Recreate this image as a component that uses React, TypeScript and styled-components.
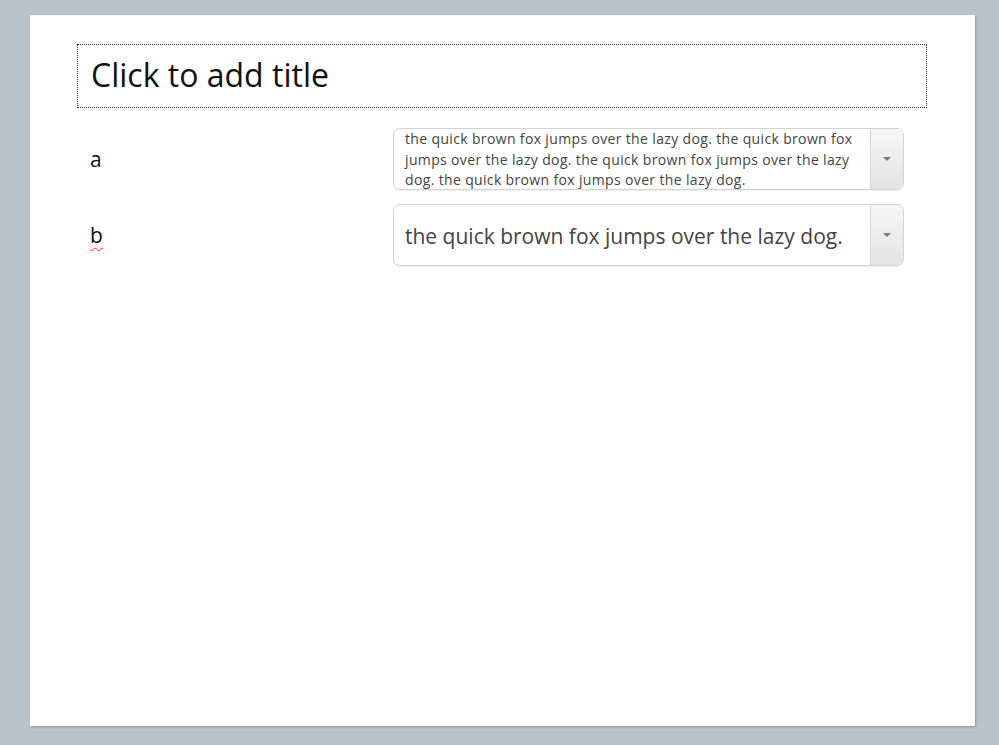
import React from 'react'
import styled, { createGlobalStyle } from 'styled-components'

const GlobalStyle = createGlobalStyle`
  html, body {
    margin: 0;
    padding: 0;
    background: #b8c2cb;
  }
  body {
    font-family: "Open Sans", "Noto Sans", "Liberation Sans", sans-serif;
  }
`

const Page = styled.div`
  width: 999px;
  height: 745px;
  box-sizing: border-box;
  padding: 15px 24px 19px 30px;
  display: flex;
`

const Slide = styled.div`
  flex: 1;
  background: #ffffff;
  box-shadow: 1px 1px 2px rgba(90, 100, 110, 0.45);
  padding: 29px 48px 0 47px;
  display: flex;
  flex-direction: column;
`

const TitleBox = styled.div`
  height: 64px;
  box-sizing: border-box;
  border: 1px dotted #333;
  display: flex;
  align-items: center;
  padding: 0 0 4px 13px;
  font-size: 32px;
  color: #111;
`

const Rows = styled.div`
  display: flex;
  flex-direction: column;
  gap: 14px;
  margin-top: 20px;
`

const Row = styled.div`
  display: grid;
  grid-template-columns: 316px 511px;
  align-items: center;
`

const Label = styled.span<{ $misspelled?: boolean }>`
  padding-left: 13px;
  font-size: 21px;
  color: #111;
  text-decoration: ${p => (p.$misspelled ? 'underline wavy #e23' : 'none')};
  text-decoration-thickness: 1px;
  text-underline-offset: 4px;
`

const Combo = styled.div`
  height: 62px;
  box-sizing: border-box;
  border: 1px solid #d2d2d2;
  border-radius: 7px;
  box-shadow: 0 1px 1px rgba(0, 0, 0, 0.06);
  display: flex;
  overflow: hidden;
  background: #fff;
`

const ComboText = styled.div<{ $small?: boolean }>`
  flex: 1;
  padding: ${p => (p.$small ? '0 5px 0 11px' : '1px 10px 0 11px')};
  display: flex;
  align-items: ${p => (p.$small ? 'flex-start' : 'center')};
  font-size: ${p => (p.$small ? '14px' : '21px')};
  letter-spacing: ${p => (p.$small ? '0.35px' : '0')};
  line-height: ${p => (p.$small ? '20.5px' : '28px')};
  color: #444;
  overflow: hidden;
`

const DropButton = styled.div`
  width: 32px;
  border-left: 1px solid #d6d6d6;
  background: linear-gradient(to bottom, #f6f6f6, #e3e3e3);
  display: flex;
  align-items: center;
  justify-content: center;
`

const Arrow = styled.span`
  width: 0;
  height: 0;
  border-left: 4px solid transparent;
  border-right: 4px solid transparent;
  border-top: 4px solid #777;
`

const long =
  'the quick brown fox jumps over the lazy dog. the quick brown fox jumps over the lazy dog. the quick brown fox jumps over the lazy dog. the quick brown fox jumps over the lazy dog.'

const App: React.FC = () => {
  return (
    <Page>
      <GlobalStyle />
      <Slide>
        <TitleBox>Click to add title</TitleBox>
        <Rows>
          <Row>
            <Label>a</Label>
            <Combo>
              <ComboText $small>{long}</ComboText>
              <DropButton>
                <Arrow />
              </DropButton>
            </Combo>
          </Row>
          <Row>
            <Label $misspelled>b</Label>
            <Combo>
              <ComboText>the quick brown fox jumps over the lazy dog.</ComboText>
              <DropButton>
                <Arrow />
              </DropButton>
            </Combo>
          </Row>
        </Rows>
      </Slide>
    </Page>
  )
}

export default App
